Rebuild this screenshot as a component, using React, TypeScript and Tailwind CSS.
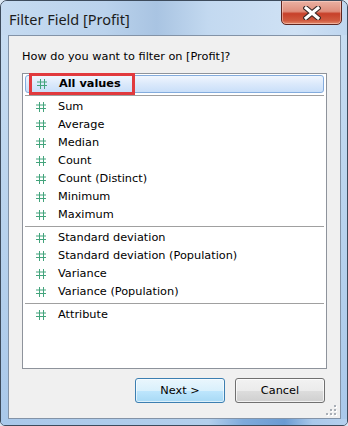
import React from "react";

const Hash = () => (
  <svg width="10" height="10" viewBox="0 0 10 10" className="shrink-0">
    <path d="M3.5 0 V10 M7.5 0 V10 M0 3 H10 M0 6.5 H10" stroke="#43a47c" strokeWidth="1" fill="none" />
  </svg>
);

const Row = ({ label }: { label: string }) => (
  <div className="h-[18px] flex items-center pl-[11px] text-[#000]">
    <Hash />
    <span className="ml-[12px] leading-[18px]">{label}</span>
  </div>
);

const Sep = () => (
  <div className="h-[5px] flex flex-col justify-center">
    <div className="h-px bg-[#a0a0a0]" />
  </div>
);

export default function App() {
  const group1 = ["Sum", "Average", "Median", "Count", "Count (Distinct)", "Minimum", "Maximum"];
  const group2 = ["Standard deviation", "Standard deviation (Population)", "Variance", "Variance (Population)"];
  return (
    <div className="w-[348px] h-[426px] bg-[#dce8f4]">
      <div className="relative w-[348px] h-[426px] rounded-t-[7px] rounded-b-[5px] border border-[#3d4b5c] bg-[linear-gradient(180deg,#c9def3_0%,#bcd5ee_40%,#a9c8ea_100%)] flex flex-col overflow-hidden">
        {/* title bar */}
        <div className="h-[34px] flex items-start shrink-0 bg-[linear-gradient(90deg,#c6dbf1_0%,#bad2ec_30%,#a9c4e2_45%,#c3d9f0_60%,#cfe1f4_85%,#bfd6ef_100%)]">
          <span className="ml-[8px] mt-[8px] text-[14.5px] leading-[20px] text-[#1c1c1c] [font-family:'Noto_Sans','Open_Sans',sans-serif]">
            Filter Field [Profit]
          </span>
          <div className="ml-auto mr-[5px] mt-[-1px] w-[61px] h-[25px] rounded-b-[5px] border border-[#5e2620] bg-[linear-gradient(180deg,#eab1a3_0%,#df8e7c_45%,#c7402a_55%,#d05a3f_85%,#e38a6a_100%)] flex items-center justify-center shadow-[inset_0_0_0_1px_rgba(255,220,210,0.5)]">
            <svg width="18" height="14" viewBox="0 0 18 14">
              <path d="M3 2 L15 12 M15 2 L3 12" stroke="#3b2a28" strokeWidth="5.2" strokeLinecap="square" fill="none" />
              <path d="M3 2 L15 12 M15 2 L3 12" stroke="#ffffff" strokeWidth="3" strokeLinecap="square" fill="none" />
            </svg>
          </div>
        </div>
        {/* client area */}
        <div className="relative ml-[7px] mr-[6px] h-[384px] shrink-0 border border-[#8393a7] bg-[#f0f0f0] [font-family:'DejaVu_Sans',Verdana,sans-serif] text-[11.3px]">
          <div className="pl-[13px] pt-[14px] leading-[13px] text-[#000]">How do you want to filter on [Profit]?</div>
          <div className="relative ml-[13px] mt-[10px] w-[305px] h-[296px] border border-[#8e939b] bg-white pt-px px-[2px]">
            <div className="h-[18px] flex items-center pl-[11px] rounded-[3px] border border-[#84acdd] bg-[linear-gradient(180deg,#f0f6fe_0%,#dbe9fb_50%,#c9dff9_100%)]">
              <Hash />
              <span className="ml-[12px] leading-[16px] font-bold text-[#000]">All values</span>
            </div>
            <Sep />
            {group1.map((l) => (
              <Row key={l} label={l} />
            ))}
            <Sep />
            {group2.map((l) => (
              <Row key={l} label={l} />
            ))}
            <Sep />
            <Row label="Attribute" />
            <div className="absolute left-[6px] top-[-1px] w-[106px] h-[22px] border-[3px] border-[#e13a3e]" />
          </div>
          <div className="mt-[9px] flex justify-end gap-[10px] pr-[15px]">
            <button className="w-[90px] h-[25px] rounded-[3px] border border-[#3c7fb1] bg-[linear-gradient(180deg,#eaf6fd_0%,#d9f0fc_50%,#bee6fd_51%,#a7d9f5_100%)] shadow-[inset_0_0_0_1px_rgba(255,255,255,0.6)] text-[#000] leading-[22px]">
              Next &gt;
            </button>
            <button className="w-[90px] h-[25px] rounded-[3px] border border-[#707070] bg-[linear-gradient(180deg,#f2f2f2_0%,#ebebeb_50%,#dddddd_51%,#cfcfcf_100%)] shadow-[inset_0_0_0_1px_rgba(255,255,255,0.7)] text-[#000] leading-[22px]">
              Cancel
            </button>
          </div>
          <svg className="absolute right-[3px] bottom-[2px]" width="12" height="12" viewBox="0 0 12 12">
            {[
              [9, 1],
              [9, 5],
              [5, 5],
              [9, 9],
              [5, 9],
              [1, 9],
            ].map(([x, y]) => (
              <g key={`${x}-${y}`}>
                <rect x={x + 1} y={y + 1} width="2" height="2" fill="#ffffff" />
                <rect x={x} y={y} width="2" height="2" fill="#a8aeb6" />
              </g>
            ))}
          </svg>
        </div>
        <div className="flex-1 bg-[linear-gradient(90deg,#a9c8ea_0%,#b3cfec_60%,#7eaadb_70%,#6a9bd2_82%,#a9c8ea_90%,#b5d0ee_100%)]" />
      </div>
    </div>
  );
}
